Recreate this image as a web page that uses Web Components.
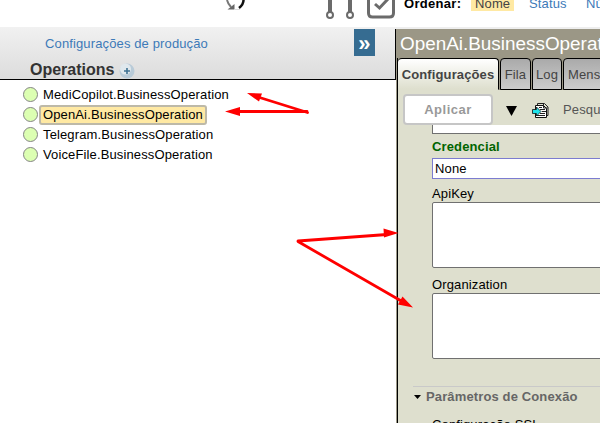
<!DOCTYPE html>
<html lang="pt"><head><meta charset="utf-8"><title>Produção</title>
<style>html,body{margin:0;width:600px;height:423px;overflow:hidden;background:#fff;font:13px "Liberation Sans",Arial,sans-serif;letter-spacing:.13px;color:#000}</style></head>
<body><production-page></production-page>
<script>
const define=(name,css,html)=>customElements.define(name,class extends HTMLElement{
  constructor(){super();this.attachShadow({mode:'open'}).innerHTML=`<style>*{box-sizing:border-box}${css}</style>${html}`;}
});
define('top-bar',`
:host{display:flex;height:27px;background:#fff;overflow:hidden;white-space:nowrap}
svg{flex:none;width:404px;height:27px;display:block}
.l{display:flex;height:11px;line-height:15px;margin-top:-4px}
b{width:67px;letter-spacing:.3px}.n{height:15px;width:43px;padding-left:4px;background:#ffe9a3;color:#444}
.s{margin-left:15px;width:57px;color:#3d7ab8}.u{color:#3d7ab8}`,
`<svg viewBox="0 0 404 27" fill="none"><path d="M227 0q1 4 4 7" stroke="#777" stroke-width="2"/><path d="M227.500 9.500h7V4z" fill="#666"/><path d="M234 9.500h6" stroke="#ddd"/><path d="M239 8q5-4 4.500-9" stroke="#111" stroke-width="2.500"/>
<g stroke="#6b6b6b"><path d="M330 0v12M350 0v12" stroke-width="4"/><g stroke-width="2"><circle cx="330" cy="15" r="3"/><circle cx="350" cy="15" r="3"/></g><path d="M368.500-3V13q0 4 4 4h17q4 0 4-4V-3" stroke-width="3"/><path d="M375 4l4.500 4L388-1" stroke-width="3"/></g></svg>
<div class="l"><b>Ordenar:</b><span class="n">Nome</span><span class="s">Status</span><span class="u">Número</span></div>`);
define('status-row',`
:host{display:flex;height:20px;padding-left:23px;align-items:center}
i{width:15px;height:15px;margin-bottom:1px;border:1px solid #858585;border-radius:50%;background:#dcffb2;flex:none}
span{margin-left:1px;height:20px;line-height:16px;padding:0 2px;border:2px solid transparent;border-radius:3px}
:host([selected]) span{background:#ffe9a3;border-color:#bdb9a8}`,`<i></i><span><slot></slot></span>`);
define('operations-panel',`
:host{display:block;width:396px;height:396px;flex:none}
header{height:53px;border-bottom:1px solid #000;background:linear-gradient(#f1f1f1,#dcdcdc);display:flex;justify-content:space-between}
.t{width:260px}.c{padding-left:45px;height:33px;line-height:33px;color:#3d7ab8}
h2{margin:0 0 0 30px;font:bold 16px/20px "Liberation Sans",Arial,sans-serif;letter-spacing:0;color:#333;display:flex;align-items:center}
svg{margin-left:5px;margin-top:2px}.r{display:flex;margin-top:2px;border-right:1px solid #000}
.x{width:21px;height:27px;margin-right:20px;background:#366c91;color:#fff;font-weight:bold;font-size:22px;line-height:30px;text-align:center}
main{padding-top:5px}`,
`<header><div class="t"><div class="c">Configurações de produção</div><h2>Operations<svg width="16" height="16"><circle cx="8" cy="8" r="7.500" fill="#b9cbd8"/><circle cx="6.500" cy="6" r="5.500" fill="#e0e8ed"/><path d="M5 8h6M8 5v6" stroke="#3f7292" stroke-width="1.600"/></svg></h2></div><div class="r"><div class="x">»</div></div></header>
<main><status-row>MediCopilot.BusinessOperation</status-row><status-row selected>OpenAi.BusinessOperation</status-row><status-row>Telegram.BusinessOperation</status-row><status-row>VoiceFile.BusinessOperation</status-row></main>`);
define('tab-item',`
:host{display:flex;flex:none;justify-content:center;height:32px;line-height:32px;color:#444;border:1px solid #000;border-radius:4px 4px 0 0;background:linear-gradient(#aaa,#ccc);margin-right:1px}
:host([active]){font-weight:bold;background:linear-gradient(#fff,#dedfce);border-bottom-color:#dedfce;border-left:0}`,`<slot></slot>`);
define('field-box',`:host{display:block;width:190px;flex:none;background:#fff;border:1px solid #707070;border-radius:2px}`,`<slot></slot>`);
define('settings-panel',`
:host{display:flex;flex-direction:column;width:204px;height:394px;margin-top:2px;border-left:1px solid #9b9786;overflow:hidden;white-space:nowrap}
.title{height:29px;flex:none;background:#9b9786;color:#fff;font-size:18.900px;letter-spacing:0;line-height:29px;padding-left:3px}
.tabs{display:flex;height:32px;flex:none;background:#9b9786;border-left:1px solid #000}
.body{flex:1;background:#dedfce;border-left:1px solid #000;display:flex;flex-direction:column;overflow:hidden}
.tools{display:flex;height:35px;flex:none;align-items:flex-start;padding:4px 0 0 5px}
.ap{width:90px;height:31px;flex:none;border:2px solid #c6c6c6;border-radius:4px;background:#fff;color:#999;font-weight:bold;line-height:27px;text-align:center;letter-spacing:.5px}
svg{flex:none}.tools span{line-height:31px;color:#555}
.f{padding-left:34px;display:flex;flex-direction:column}
.cred{height:24px;line-height:25px;color:#006400;font-weight:bold}
.sec{margin:27px 0 0 15px;border-top:1px solid #c9c9c9;height:26px;display:flex;flex:none;line-height:20px;font-weight:bold;color:#666}
.ssl{padding-left:34px;margin-top:4px;line-height:17px}`,
`<div class="title">OpenAi.BusinessOperation</div>
<div class="tabs"><tab-item active style="width:101px">Configurações</tab-item><tab-item style="width:31px">Fila</tab-item><tab-item style="width:30px">Log</tab-item><tab-item style="width:80px;justify-content:flex-start;padding-left:4px">Mensagens</tab-item></div>
<div class="body"><div class="tools"><div class="ap">Aplicar</div>
<svg width="70" height="30"><path d="M13 12h11l-5.500 10z"/><path d="M42.500 11.500h8l3 3v9h-11z" fill="#fff" stroke="#111"/><path d="M44.500 11V9.500h7l3.500 3.500v8.500h-1M50.500 10v4h4M46 13.500h3M47 15.500h5M49 17.500h4M47 19.500h5M44 21.500h8" fill="none" stroke="#222"/><path d="M39.500 15.500h4v-2.500l4.500 4.500-4.500 4.500v-2.500h-4z" fill="#1de3ea" stroke="#111" stroke-width=".8"/></svg><span>Pesquisar</span></div>
<div class="f"><field-box style="height:9px;border-top:0;border-radius:0"></field-box><div class="cred">Credencial</div><field-box style="height:21px;border-color:#7c7cd0;border-radius:0;line-height:20px;padding-left:2px">None</field-box><div style="height:23px;line-height:30px">ApiKey</div><field-box style="height:66px"></field-box><div style="height:25px;line-height:33px">Organization</div><field-box style="height:66px"></field-box></div>
<div class="sec"><svg width="13" height="19"><path d="M1 8h7l-3.500 4z"/></svg><span>Parâmetros de Conexão</span></div><div class="ssl">Configuração SSL</div></div>`);
define('pointer-arrows',`:host{position:absolute;inset:0;pointer-events:none}svg{display:block}`,
`<svg width="600" height="423"><g stroke="#f00" stroke-width="2.800" stroke-linecap="round" fill="#f00"><path d="M307.500 112.500L258 97M307 111.500H236M298 241L387 234.500M298 241.500L403 302"/></g><g fill="#f00"><path d="M247 93l15 .5-3 8zM225 111.500l15-4.500v9zM398.500 233l-15-4.500 .500 9zM413 307.500l-10.500-11-4.500 8z"/></g></svg>`);
define('production-page',`:host{display:block;position:relative;width:600px;height:423px;overflow:hidden}.row{display:flex;height:396px;background:linear-gradient(#eee 2px,#fff 2px)}`,
`<top-bar></top-bar><div class="row"><operations-panel></operations-panel><settings-panel></settings-panel></div><pointer-arrows></pointer-arrows>`);
</script></body></html>
